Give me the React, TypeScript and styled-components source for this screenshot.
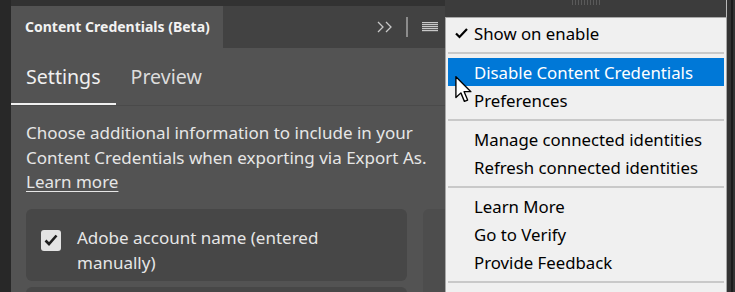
import React from "react";
import styled, { createGlobalStyle } from "styled-components";

const Global = createGlobalStyle`
  html, body { margin: 0; padding: 0; background: #2b2b2b; }
  * { box-sizing: border-box; }
`;

const UI = `"Noto Sans", "Open Sans", "DejaVu Sans", sans-serif`;

const Root = styled.div`
  position: relative;
  display: flex;
  width: 735px;
  height: 292px;
  overflow: hidden;
  background: #2b2b2b;
  font-family: ${UI};
`;

const Gutter = styled.div`
  width: 11px;
  flex: none;
  background: #282828;
`;

const Panel = styled.div`
  width: 434px;
  flex: none;
  display: flex;
  flex-direction: column;
  background: #323232;
  padding-top: 6px;
`;

const Header = styled.div`
  display: flex;
  height: 42px;
  flex: none;
`;

const PanelTab = styled.div`
  width: 212px;
  background: #535353;
  color: #f2f2f2;
  font-weight: 700;
  font-size: 14px;
  display: flex;
  align-items: center;
  padding-left: 14px;
  padding-bottom: 1px;
`;

const HeaderRest = styled.div`
  flex: 1;
  background: #424242;
  display: flex;
  align-items: center;
  justify-content: flex-end;
  padding-right: 7px;
`;

const IconBtn = styled.div<{ $mr?: number }>`
  display: flex;
  align-items: center;
  margin-right: ${(p) => p.$mr ?? 0}px;
`;

const Divider = styled.div`
  width: 2px;
  height: 20px;
  background: #8c8c8c;
  margin-right: 14px;
`;

const Body = styled.div`
  flex: 1;
  background: #535353;
  display: flex;
  flex-direction: column;
`;

const TabBar = styled.div`
  display: flex;
  height: 58px;
  border-bottom: 1px solid #4a4a4a;
`;

const Tab = styled.div<{ $active?: boolean }>`
  padding: 0 15px;
  display: flex;
  align-items: center;
  font-size: 19.6px;
  color: ${(p) => (p.$active ? "#f0f0f0" : "#dcdcdc")};
  border-bottom: 2px solid ${(p) => (p.$active ? "#f0f0f0" : "transparent")};
  padding-top: 2px;
`;

const Desc = styled.p`
  margin: 15px 0 0;
  padding: 0 0 0 15px;
  font-size: 17px;
  line-height: 24.5px;
  color: #e6e6e6;
`;

const LearnLink = styled.a`
  color: #e6e6e6;
  text-decoration: underline;
  text-underline-offset: 3px;
`;

const CardRow = styled.div`
  display: flex;
  gap: 16px;
  margin-top: 14px;
  padding-left: 15px;
`;

const CardList = styled.div`
  display: flex;
  flex-direction: column;
  gap: 6px;
`;

const Card = styled.div`
  width: 381px;
  height: 72px;
  flex: none;
  background: #474747;
  border-radius: 6px;
  display: flex;
  align-items: flex-start;
  gap: 16px;
  padding: 16px 15px 0;
`;

const Check = styled.div`
  width: 20px;
  height: 21px;
  flex: none;
  margin-top: 5px;
  background: #e3e3e3;
  border-radius: 3px;
  display: flex;
  align-items: center;
  justify-content: center;
`;

const CardText = styled.div`
  font-size: 17px;
  line-height: 25px;
  color: #e6e6e6;
`;

const Side = styled.div`
  flex: 1;
  height: 100px;
  background: #4d4d4d;
  border-radius: 6px 0 0 0;
`;

const Behind = styled.div`
  width: 281px;
  flex: none;
  background: #3c3c3c;
  display: flex;
  justify-content: center;
`;

const Grip = styled.div`
  width: 28px;
  height: 5px;
  background: repeating-linear-gradient(90deg, #5a5a5a 0 1px, transparent 1px 3px);
`;

const RightEdge = styled.div`
  width: 9px;
  flex: none;
  background: #333;
  border-left: 1px solid #b8b8b8;
  display: flex;
  justify-content: center;
`;

const EdgeLine = styled.div`
  width: 2px;
  margin-left: 2px;
  background: #1c1c1c;
`;

const Menu = styled.div`
  position: absolute;
  left: 445px;
  top: 17px;
  width: 282px;
  height: 300px;
  background: #f0f0f0;
  border: 1px solid #a8a8a8;
  padding: 1px 2px;
  font-family: ${UI};
`;

const Item = styled.div<{ $hl?: boolean }>`
  height: 28px;
  display: flex;
  align-items: center;
  padding-left: 26px;
  position: relative;
  font-size: 16.8px;
  color: ${(p) => (p.$hl ? "#ffffff" : "#000000")};
  background: ${(p) => (p.$hl ? "#0078d7" : "transparent")};
`;

const Tick = styled.span`
  position: absolute;
  left: 7px;
  top: 9px;
  display: flex;
`;

const Sep = styled.div`
  height: 11px;
  display: flex;
  align-items: center;
  &::after {
    content: "";
    flex: 1;
    height: 2px;
    background: #c9c9c9;
  }
`;

const Cursor = styled.svg`
  position: absolute;
  left: 455px;
  top: 76px;
`;

export default function App() {
  return (
    <Root>
      <Global />
      <Gutter />
      <Panel>
        <Header>
          <PanelTab>Content Credentials (Beta)</PanelTab>
          <HeaderRest>
            <IconBtn $mr={14}>
              <svg width="15" height="12" viewBox="0 0 15 12">
                <path d="M1 1 L6 6 L1 11 M9 1 L14 6 L9 11" fill="none" stroke="#c8c8c8" strokeWidth="1.3" />
              </svg>
            </IconBtn>
            <Divider />
            <IconBtn>
              <svg width="16" height="10" viewBox="0 0 16 10">
                {[0, 2, 4, 6, 8].map((y) => (
                  <rect key={y} x="0" y={y} width="16" height="1.2" fill="#c8c8c8" />
                ))}
              </svg>
            </IconBtn>
          </HeaderRest>
        </Header>
        <Body>
          <TabBar>
            <Tab $active>Settings</Tab>
            <Tab>Preview</Tab>
          </TabBar>
          <Desc>
            Choose additional information to include in your Content Credentials when exporting via Export As.
            <br />
            <LearnLink>Learn more</LearnLink>
          </Desc>
          <CardRow>
            <CardList>
              <Card>
                <Check>
                  <svg width="14" height="12" viewBox="0 0 14 12">
                    <path d="M1.5 6.5 L5 10 L12.5 1.5" fill="none" stroke="#1e1e1e" strokeWidth="2.6" />
                  </svg>
                </Check>
                <CardText>Adobe account name (entered manually)</CardText>
              </Card>
              <Card />
            </CardList>
            <Side />
          </CardRow>
        </Body>
      </Panel>
      <Behind>
        <Grip />
      </Behind>
      <RightEdge>
        <EdgeLine />
      </RightEdge>
      <Menu>
        <Item>
          <Tick>
            <svg width="13" height="11" viewBox="0 0 13 11">
              <path d="M1 5.5 L4.5 9 L12 1" fill="none" stroke="#000" strokeWidth="2.2" />
            </svg>
          </Tick>
          Show on enable
        </Item>
        <Sep />
        <Item $hl>Disable Content Credentials</Item>
        <Item>Preferences</Item>
        <Sep />
        <Item>Manage connected identities</Item>
        <Item>Refresh connected identities</Item>
        <Sep />
        <Item>Learn More</Item>
        <Item>Go to Verify</Item>
        <Item>Provide Feedback</Item>
        <Sep />
      </Menu>
      <Cursor width="18" height="27" viewBox="0 0 13 20">
        <path d="M0.5 0.5 L0.5 16 L4.2 12.5 L6.8 18.8 L9.2 17.8 L6.6 11.6 L11.6 11.6 Z" fill="#fff" stroke="#000" strokeWidth="1" strokeLinejoin="round" />
      </Cursor>
    </Root>
  );
}
